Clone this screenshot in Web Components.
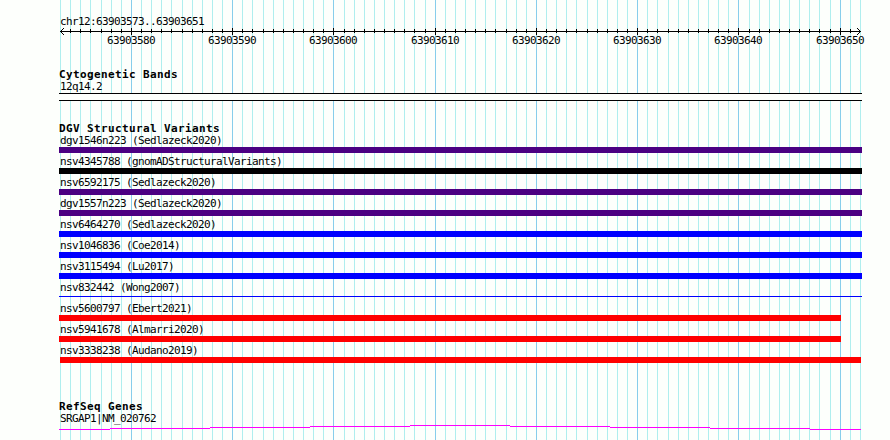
<!DOCTYPE html>
<html lang="en">
<head>
<meta charset="utf-8">
<title>chr12:63903573..63903651</title>
<style>
	body {
		margin: 0;
		background: #fdfffc;
		overflow: hidden;
	}
</style>
</head>
<body>
<genome-panel start="63903573" end="63903651">
	<genome-scale start="63903573" end="63903651">chr12:63903573..63903651</genome-scale>
	<genome-track heading="Cytogenetic Bands" style="height: 54px">
		<genome-feature kind="band">12q14.2</genome-feature>
	</genome-track>
	<genome-track heading="DGV Structural Variants" style="height: 278px">
		<genome-feature color="#4b0082">dgv1546n223 (Sedlazeck2020)</genome-feature>
		<genome-feature color="#000000">nsv4345788 (gnomADStructuralVariants)</genome-feature>
		<genome-feature color="#4b0082">nsv6592175 (Sedlazeck2020)</genome-feature>
		<genome-feature color="#4b0082">dgv1557n223 (Sedlazeck2020)</genome-feature>
		<genome-feature color="#0000ff">nsv6464270 (Sedlazeck2020)</genome-feature>
		<genome-feature color="#0000ff">nsv1046836 (Coe2014)</genome-feature>
		<genome-feature color="#0000ff">nsv3115494 (Lu2017)</genome-feature>
		<genome-feature color="#0000ff" kind="line">nsv832442 (Wong2007)</genome-feature>
		<genome-feature color="#ff0000" to="782">nsv5600797 (Ebert2021)</genome-feature>
		<genome-feature color="#ff0000" to="782">nsv5941678 (Almarri2020)</genome-feature>
		<genome-feature color="#ff0000" from="1" to="802">nsv3338238 (Audano2019)</genome-feature>
	</genome-track>
	<genome-track heading="RefSeq Genes">
		<genome-feature kind="intron" color="#ff00ff">SRGAP1|NM_020762</genome-feature>
	</genome-track>
</genome-panel>

<script>
const PAD = 60;
const SPAN = 800;

// Pixel column of every base boundary, plus whether it is a round ten.
function columns(start, end) {
	const count = end - start + 1;
	return Array.from({ length: count + 1 }, (_, i) => ({
		x: PAD + Math.round((i * SPAN) / count),
		base: start + i,
		major: (start + i) % 10 === 0,
	}));
}

class GenomePanel extends HTMLElement {
	connectedCallback() {
		const shadow = this.attachShadow({ mode: 'open' });
		const cols = columns(+this.getAttribute('start'), +this.getAttribute('end'));
		const lines = cols
			.map((c) => `<rect x="${c.x}" y="0" width="1" height="440" fill="${c.major ? '#87ceeb' : '#afeeee'}"/>`)
			.join('');

		shadow.innerHTML = `
      <style>
        :host {
          display: block;
          position: relative;
          width: 890px;
          height: 440px;
          overflow: hidden;
          color: #000;
          font: 11px/12px "DejaVu Sans Mono", monospace;
          letter-spacing: -0.623px;
        }

        svg {
          position: absolute;
          inset: 0;
        }

        .content {
          position: relative;
          display: flex;
          flex-direction: column;
          padding: 15px 28px 0 59px;
        }
      </style>
      <svg width="890" height="440" shape-rendering="crispEdges">${lines}</svg>
      <div class="content"><slot></slot></div>
    `;
	}
}

class GenomeScale extends HTMLElement {
	connectedCallback() {
		const shadow = this.attachShadow({ mode: 'open' });
		const cols = columns(+this.getAttribute('start'), +this.getAttribute('end'));
		const ticks = cols
			.slice(1, -1)
			.map((c) => `<rect x="${c.x - 59}" y="${c.major ? 1 : 2}" width="1" height="${c.major ? 7 : 4}"/>`)
			.join('');
		const labels = cols
			.filter((c) => c.major)
			.map((c) => `<text x="${c.x - 83}" y="17">${c.base}</text>`)
			.join('');

		shadow.innerHTML = `
      <style>
        :host {
          display: block;
          height: 53px;
        }

        .region {
          display: block;
          height: 12px;
          padding-left: 1px;
          line-height: 14px;
        }

        svg {
          display: block;
          overflow: visible;
        }
      </style>
      <span class="region"><slot></slot></span>
      <svg width="803" height="20">
        <g shape-rendering="crispEdges">
          <rect x="1" y="4" width="801" height="1"/>
          ${ticks}
        </g>
        <path d="M5 1L1.5 4.5L5 8M798 1L801.5 4.5L798 8" fill="none" stroke="#000"/>
        ${labels}
      </svg>
    `;
	}
}

class GenomeTrack extends HTMLElement {
	connectedCallback() {
		const shadow = this.attachShadow({ mode: 'open' });
		shadow.innerHTML = `
      <style>
        :host {
          display: block;
        }

        h2 {
          margin: 0;
          height: 13px;
          font: bold 11px/13px "DejaVu Sans Mono", monospace;
          letter-spacing: 0.377px;
        }
      </style>
      <h2>${this.getAttribute('heading')}</h2>
      <slot></slot>
    `;
	}
}

class GenomeFeature extends HTMLElement {
	connectedCallback() {
		const shadow = this.attachShadow({ mode: 'open' });
		const color = this.getAttribute('color') ?? '#000';
		const from = +(this.getAttribute('from') ?? 0);
		const to = +(this.getAttribute('to') ?? 803);
		const kind = this.getAttribute('kind') ?? 'bar';

		const rect = (x, y, w, h) => `<rect x="${x}" y="${y}" width="${w}" height="${h}"/>`;
		const glyphs = {
			bar: () => rect(from, 0, to - from, 6),
			line: () => rect(from, 2, to - from, 1),
			band: () => `<rect width="803" height="8" fill="#fdfffc"/>` + rect(0, 0, 803, 1) + rect(0, 7, 803, 1),
			// shallow stepped arc across the whole intron
			intron: () => {
				const edges = [0, 51, 151, 251, 351, 451, 551, 651, 751, 802];
				const rows = [4, 3, 2, 1, 0, 1, 2, 3, 4];
				return rows.map((y, i) => rect(edges[i], y, edges[i + 1] - edges[i], 1)).join('');
			},
		};

		shadow.innerHTML = `
      <style>
        :host {
          display: block;
          height: 21px;
        }

        .label {
          display: block;
          height: 12px;
          padding-left: 1px;
          line-height: 11px;
        }

        svg {
          display: block;
          overflow: visible;
        }
      </style>
      <span class="label"><slot></slot></span>
      <svg width="803" height="9" fill="${color}" shape-rendering="crispEdges">${glyphs[kind]()}</svg>
    `;
	}
}

customElements.define('genome-panel', GenomePanel);
customElements.define('genome-scale', GenomeScale);
customElements.define('genome-track', GenomeTrack);
customElements.define('genome-feature', GenomeFeature);
</script>
</body>
</html>
